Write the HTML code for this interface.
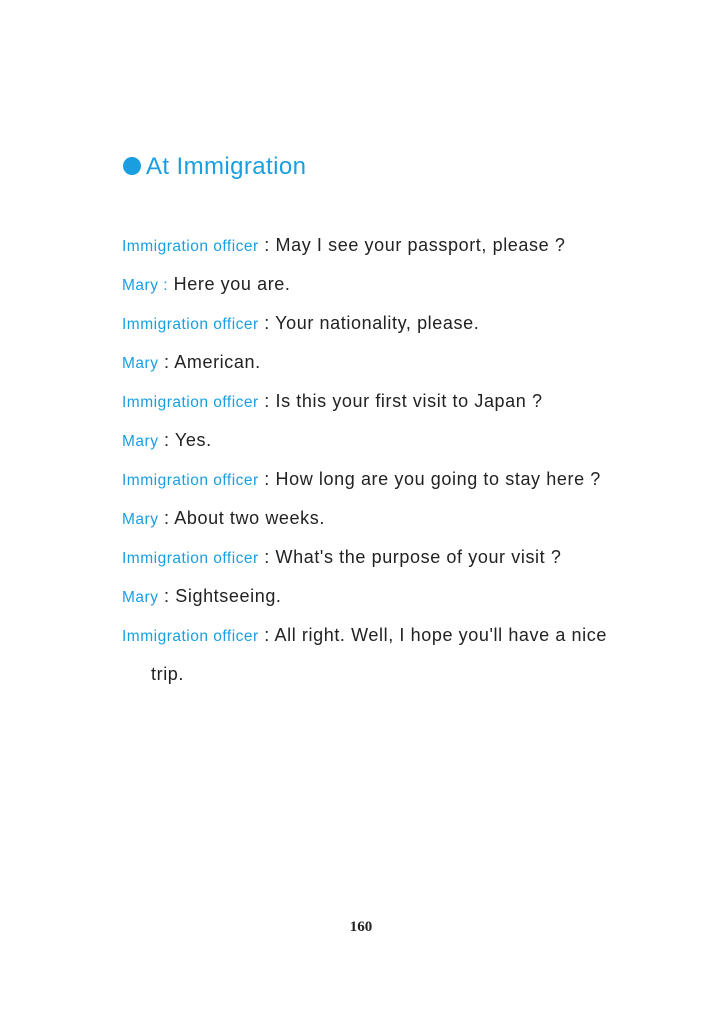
<!DOCTYPE html>
<html><head><meta charset="utf-8"><style>
body{margin:0;background:#fff;width:722px;height:1024px;position:relative;overflow:hidden;font-family:"Liberation Sans",sans-serif}
.t{position:absolute;left:123px;top:153px;color:#1a9ee0;font-size:24px;letter-spacing:0.4px;white-space:nowrap}
.dot{display:inline-block;width:18px;height:18px;border-radius:50%;background:#1a9ee0;vertical-align:-1px;margin-right:5px}
.l{position:absolute;left:122px;white-space:nowrap;font-size:18px;color:#222;letter-spacing:0.6px}
.b{color:#1a9ee0;font-size:15.5px;letter-spacing:0.5px}
.pg{position:absolute;top:919px;left:0;width:722px;text-align:center;font-family:"Liberation Serif",serif;font-weight:bold;font-size:15px;color:#222}
</style></head><body>
<div class="t"><span class="dot"></span>At Immigration</div>
<div class="l" style="top:235px"><span class="b">Immigration officer</span> : May I see your passport, please ?</div>
<div class="l" style="top:274px"><span class="b">Mary :</span> Here you are.</div>
<div class="l" style="top:313px"><span class="b">Immigration officer</span> : Your nationality, please.</div>
<div class="l" style="top:352px"><span class="b">Mary</span> : American.</div>
<div class="l" style="top:391px"><span class="b">Immigration officer</span> : Is this your first visit to Japan ?</div>
<div class="l" style="top:430px"><span class="b">Mary</span> : Yes.</div>
<div class="l" style="top:469px"><span class="b">Immigration officer</span> : How long are you going to stay here ?</div>
<div class="l" style="top:508px"><span class="b">Mary</span> : About two weeks.</div>
<div class="l" style="top:547px"><span class="b">Immigration officer</span> : What's the purpose of your visit ?</div>
<div class="l" style="top:586px"><span class="b">Mary</span> : Sightseeing.</div>
<div class="l" style="top:625px"><span class="b">Immigration officer</span> : All right. Well, I hope you'll have a nice</div>
<div class="l" style="top:664px;left:151px">trip.</div>
<div class="pg">160</div>
</body></html>
